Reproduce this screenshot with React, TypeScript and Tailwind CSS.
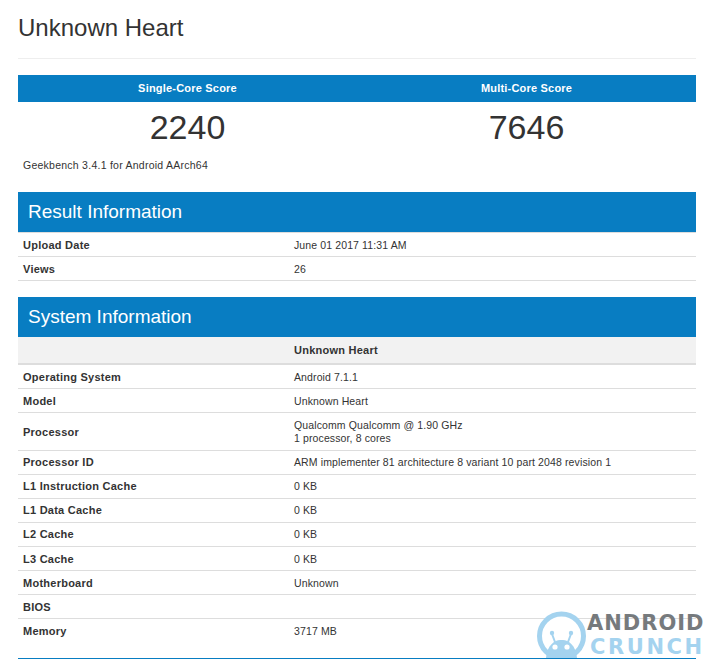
import React from 'react';

const systemRows: { label: string; value: React.ReactNode; h: string }[] = [
  { label: 'Operating System', value: 'Android 7.1.1', h: 'h-[24px] pt-[1px]' },
  { label: 'Model', value: 'Unknown Heart', h: 'h-[24px] pt-[1px]' },
  {
    label: 'Processor',
    value: (
      <>
        Qualcomm Qualcomm @ 1.90 GHz
        <br />1 processor, 8 cores
      </>
    ),
    h: 'h-[38px] pt-[1px]',
  },
  { label: 'Processor ID', value: 'ARM implementer 81 architecture 8 variant 10 part 2048 revision 1', h: 'h-[24px]' },
  { label: 'L1 Instruction Cache', value: '0 KB', h: 'h-[24px]' },
  { label: 'L1 Data Cache', value: '0 KB', h: 'h-[24px]' },
  { label: 'L2 Cache', value: '0 KB', h: 'h-[24px]' },
  { label: 'L3 Cache', value: '0 KB', h: 'h-[24px] pt-[1px]' },
  { label: 'Motherboard', value: 'Unknown', h: 'h-[24px] pt-[1px]' },
  { label: 'BIOS', value: '', h: 'h-[24px] pt-[1px]' },
];

const Row = ({ label, value, h }: { label: string; value: React.ReactNode; h: string }) => (
  <div className={`grid grid-cols-[276px_1fr] items-center border-b border-[#ddd] ${h}`}>
    <div className="pl-[5px] font-bold text-[11px] tracking-[0.25px] text-[#333]">{label}</div>
    <div className="text-[10.5px] leading-[13px] tracking-[0.12px] text-[#333]">{value}</div>
  </div>
);

const SectionTitle = ({ children }: { children: React.ReactNode }) => (
  <div className="h-[40px] flex items-center pl-[10px] pt-[1px] bg-[#087dc2] text-white text-[19px]">{children}</div>
);

const Logo = () => (
  <div className="absolute left-[537px] top-[611px] w-[174px] h-[47px] flex items-start">
    <svg width="50" height="47" viewBox="0 0 50 47" className="shrink-0">
      <circle cx="24.5" cy="25" r="22" fill="#fff" stroke="#a4d3ef" strokeWidth="5" />
      <path d="M9 47 C10 34 18 29 23 29 L26 29 C31 29 39 34 40 47 Z" fill="#a4d3ef" />
      <path d="M18 31 L15 23 M31 31 L34 23" stroke="#a4d3ef" strokeWidth="2" />
      <circle cx="15" cy="22" r="2.2" fill="#a4d3ef" />
      <circle cx="34" cy="22" r="2.2" fill="#a4d3ef" />
      <circle cx="18" cy="36" r="2.6" fill="#fff" />
      <circle cx="30" cy="36" r="2.6" fill="#fff" />
    </svg>
    <div className="mt-[1px] flex flex-col gap-[2px] font-['DejaVu_Sans',sans-serif] font-bold text-[21px] leading-[22px]">
      <span className="tracking-[1px] text-[#767a7d]">ANDROID</span>
      <span className="ml-[3px] tracking-[2.6px] text-[#a4d3ef]">CRUNCH</span>
    </div>
  </div>
);

export default function App() {
  return (
    <div className="relative w-[711px] h-[659px] overflow-hidden bg-white font-['Liberation_Sans',Arial,sans-serif] text-[#333]">
      <div className="mx-[18px] w-[678px]">
        <h1 className="h-[58px] pt-[14px] text-[24px] leading-[28px] font-normal">Unknown Heart</h1>
        <div className="h-[1px] bg-[#eee]" />

        <div className="mt-[16px] grid grid-cols-2 h-[27px] items-center bg-[#087dc2] text-white text-center text-[11px] font-bold tracking-[0.2px]">
          <div>Single-Core Score</div>
          <div>Multi-Core Score</div>
        </div>
        <div className="grid grid-cols-2 h-[50px] items-center text-center text-[34px]">
          <div>2240</div>
          <div>7646</div>
        </div>
        <div className="h-[40px] pl-[5px] pt-[5px] text-[10.5px] leading-[16px] tracking-[0.25px]">
          Geekbench 3.4.1 for Android AArch64
        </div>

        <SectionTitle>Result Information</SectionTitle>
        <div className="border-t border-[#ddd]">
          <Row label="Upload Date" value="June 01 2017 11:31 AM" h="h-[24px] pt-[1px]" />
          <Row label="Views" value="26" h="h-[24px] pt-[1px]" />
        </div>

        <div className="mt-[16px]">
          <SectionTitle>System Information</SectionTitle>
          <div className="grid grid-cols-[276px_1fr] h-[28px] items-center bg-[#f2f2f2] border-b-2 border-[#ddd] text-[11px] font-bold tracking-[0.25px]">
            <div />
            <div>Unknown Heart</div>
          </div>
          {systemRows.map((row) => (
            <Row key={row.label} {...row} />
          ))}
          <div className="grid grid-cols-[276px_1fr] items-center h-[25px]">
            <div className="pl-[5px] font-bold text-[11px] tracking-[0.25px]">Memory</div>
            <div className="text-[10.5px] tracking-[0.12px]">3717 MB</div>
          </div>
          <div className="mt-[14px] h-[1px] bg-[#087dc2]" />
        </div>
      </div>
      <Logo />
    </div>
  );
}
